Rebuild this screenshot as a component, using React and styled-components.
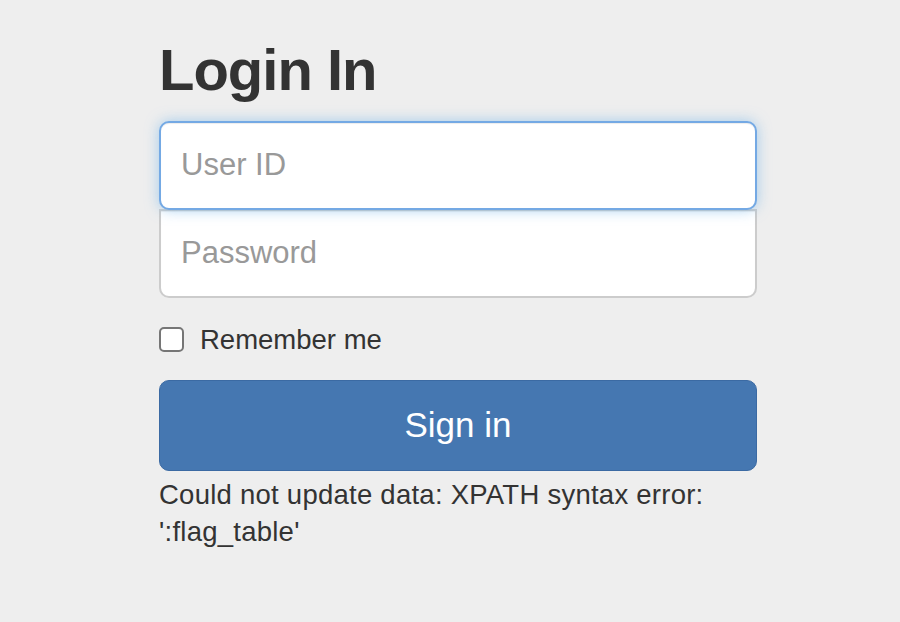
import React from 'react';
import styled, { createGlobalStyle } from 'styled-components';

const GlobalStyle = createGlobalStyle`
  html, body {
    margin: 0;
    padding: 0;
    background: #eeeeee;
  }
  body {
    font-family: "Liberation Sans", Arial, Helvetica, sans-serif;
    color: #333333;
  }
`;

const Page = styled.div`
  width: 900px;
  min-height: 622px;
`;

const Form = styled.form`
  width: 598px;
  margin-left: 159px;
  display: flex;
  flex-direction: column;
`;

const Heading = styled.h2`
  margin: 38px 0 19px;
  font-size: 58px;
  line-height: 1.1;
  font-weight: 700;
  letter-spacing: -1px;
  color: #333333;
`;

const Field = styled.input`
  box-sizing: border-box;
  width: 100%;
  height: 89px;
  margin: 0 0 ${(p) => (p.$first ? '-1px' : '0')};
  padding: 0 20px;
  font-family: "Liberation Sans", Arial, sans-serif;
  font-size: 31px;
  color: #555555;
  background: #ffffff;
  border: 2px solid ${(p) => (p.$focused ? '#74a9e4' : '#cccccc')};
  border-radius: ${(p) => (p.$first ? '10px' : '0 0 10px 10px')};
  box-shadow: ${(p) =>
    p.$focused
      ? 'inset 0 1px 1px rgba(0,0,0,.075), 0 0 14px rgba(102,175,233,.55)'
      : 'inset 0 1px 1px rgba(0,0,0,.075)'};
  position: relative;
  z-index: ${(p) => (p.$focused ? 2 : 1)};
  outline: none;
  caret-color: #333333;

  &::placeholder {
    color: #999999;
  }
`;

const CheckRow = styled.label`
  display: flex;
  align-items: center;
  gap: 16px;
  height: 38px;
  margin-top: 23px;
  font-size: 27.5px;
  color: #333333;
  cursor: pointer;
`;

const Check = styled.input`
  appearance: none;
  box-sizing: border-box;
  width: 25px;
  height: 25px;
  margin: 0;
  border: 2px solid #767676;
  border-radius: 5px;
  background: #ffffff;
`;

const SubmitButton = styled.button`
  box-sizing: border-box;
  width: 100%;
  height: 91px;
  margin-top: 21px;
  font-family: "Liberation Sans", Arial, sans-serif;
  font-size: 35px;
  color: #ffffff;
  background: #4577b1;
  border: 1px solid #3b6aa3;
  border-radius: 10px;
  cursor: pointer;
`;

const ErrorText = styled.div`
  margin-top: 5px;
  font-size: 27.5px;
  letter-spacing: 0.25px;
  line-height: 37px;
  color: #333333;
`;

export default function App() {
  return (
    <Page>
      <GlobalStyle />
      <Form onSubmit={(e) => e.preventDefault()}>
        <Heading>Login In</Heading>
        <Field type="text" placeholder="User ID" $first $focused autoFocus />
        <Field type="password" placeholder="Password" />
        <CheckRow>
          <Check type="checkbox" />
          Remember me
        </CheckRow>
        <SubmitButton type="submit">Sign in</SubmitButton>
        <ErrorText>Could not update data: XPATH syntax error: ':flag_table'</ErrorText>
      </Form>
    </Page>
  );
}
